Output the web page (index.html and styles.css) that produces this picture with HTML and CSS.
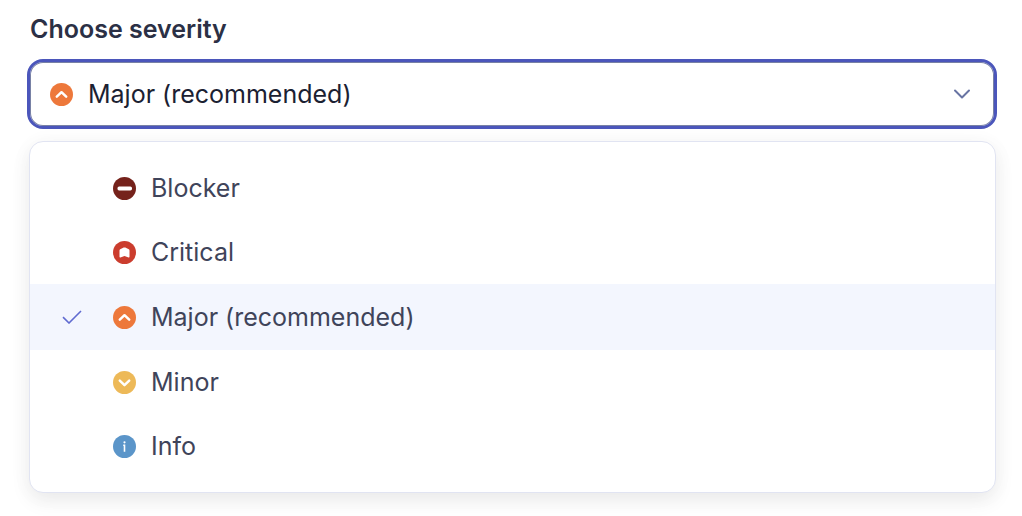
FILE: index.html
```html
<!DOCTYPE html>
<html lang="en">
<head>
<meta charset="utf-8">
<meta name="viewport" content="width=device-width, initial-scale=1">
<title>Choose severity</title>
<link rel="stylesheet" href="styles.css">
</head>
<body>
<main class="severity">
  <label class="severity-label" for="severity">Choose severity</label>
  <div class="field">
    <svg class="icon field-icon" viewBox="0 0 23 23" aria-hidden="true"><circle class="major" cx="11.5" cy="11.5" r="11.5"/><path class="stroke" d="M6.8 13.7l4.7-4.5 4.7 4.5"/></svg>
    <select class="field-select" id="severity">
      <option>Blocker</option>
      <option>Critical</option>
      <option selected>Major (recommended)</option>
      <option>Minor</option>
      <option>Info</option>
    </select>
    <svg class="chevron" viewBox="0 0 18 10" aria-hidden="true"><path d="M2 1.5l7 7 7-7"/></svg>
  </div>
  <div class="menu" role="listbox" aria-label="Choose severity">
    <button class="option" type="button" role="option" aria-selected="false">
      <span class="mark"></span>
      <svg class="icon" viewBox="0 0 23 23" aria-hidden="true"><circle class="blocker" cx="11.5" cy="11.5" r="11.5"/><rect class="solid" x="4.5" y="9.6" width="14.5" height="3.8" rx="1.6"/></svg>
      <span>Blocker</span>
    </button>
    <button class="option" type="button" role="option" aria-selected="false">
      <span class="mark"></span>
      <svg class="icon" viewBox="0 0 23 23" aria-hidden="true"><circle class="critical" cx="11.5" cy="11.5" r="11.5"/><path class="solid" d="M11.5 6.4q.4 0 .8.2l3.5 1.700q.7.4.7 1.200v6.200q0 .9-.9.700l-4.100-1.500-4.100 1.500q-.9.200-.9-.700V9.500q0-.8.7-1.200l3.500-1.700q.4-.2.800-.2z"/></svg>
      <span>Critical</span>
    </button>
    <button class="option option-selected" type="button" role="option" aria-selected="true">
      <span class="mark"><svg class="check" viewBox="0 0 20 14" aria-hidden="true"><path d="M1 7.200l6 5.800L19 1"/></svg></span>
      <svg class="icon" viewBox="0 0 23 23" aria-hidden="true"><circle class="major" cx="11.5" cy="11.5" r="11.5"/><path class="stroke" d="M6.8 13.7l4.7-4.5 4.7 4.5"/></svg>
      <span>Major (recommended)</span>
    </button>
    <button class="option" type="button" role="option" aria-selected="false">
      <span class="mark"></span>
      <svg class="icon" viewBox="0 0 23 23" aria-hidden="true"><circle class="minor" cx="11.5" cy="11.5" r="11.5"/><path class="stroke" d="M6.8 9.600l4.7 4.500 4.7-4.500"/></svg>
      <span>Minor</span>
    </button>
    <button class="option" type="button" role="option" aria-selected="false">
      <span class="mark"></span>
      <svg class="icon" viewBox="0 0 23 23" aria-hidden="true"><circle class="info" cx="11.5" cy="11.5" r="11.5"/><circle class="solid" cx="11.5" cy="7.300" r="1.100"/><path class="info-stem" d="M10.200 10.200h1.300v6.500"/></svg>
      <span>Info</span>
    </button>
  </div>
</main>
</body>
</html>
```
FILE: styles.css
```css
* {
  box-sizing: border-box;
}

body {
  margin: 0;
  background: #fff;
  font-family: Inter, "Liberation Sans", sans-serif;
  font-size: 25px;
  line-height: 32px;
}

.severity {
  display: flex;
  flex-direction: column;
  padding: 13px 25px 23px 27px;
}

.severity-label {
  margin: 0 3px 14px;
  color: #2b3045;
  font-weight: 600;
}

.field {
  display: grid;
  grid-template-columns: 100%;
  align-items: center;
}

.field > * {
  grid-area: 1 / 1;
}

.field-select {
  appearance: none;
  width: 100%;
  height: 70px;
  padding: 0 60px 0 58px;
  border: 3px solid #4b56bb;
  border-radius: 16px;
  outline: 0;
  background: #fff;
  box-shadow: inset 0 0 0 1px #7881a5;
  color: #1b2132;
  font: inherit;
}

.field-icon,
.chevron {
  z-index: 1;
  pointer-events: none;
}

.field-icon {
  margin-left: 23px;
}

.icon {
  flex: none;
  width: 23px;
  height: 23px;
}

.chevron {
  justify-self: end;
  width: 18px;
  height: 10px;
  margin-right: 26px;
  fill: none;
  stroke: #6874a3;
  stroke-width: 2;
  stroke-linecap: round;
  stroke-linejoin: round;
}

.menu {
  display: flex;
  flex-direction: column;
  margin: 12px 1px 0 2px;
  padding: 14px 0;
  border: 1px solid #e1e4f2;
  border-radius: 14px;
  background: #fff;
  box-shadow: 0 8px 20px rgba(0, 0, 0, 0.07), 0 2px 24px rgba(0, 0, 0, 0.03);
}

.option {
  display: flex;
  align-items: center;
  height: 64px;
  padding: 0 32px;
  border: 0;
  background: none;
  color: #3f445a;
  font: inherit;
  text-align: left;
}

.option .icon {
  margin-right: 15px;
}

.option-selected {
  height: 66px;
  background: #f3f6fe;
}

.mark {
  display: flex;
  width: 51px;
}

.check {
  width: 20px;
  height: 14px;
  fill: none;
  stroke: #606bd0;
  stroke-width: 1.6;
}

.blocker {
  fill: #75221b;
}

.critical {
  fill: #cb3d2e;
}

.major {
  fill: #ed783b;
}

.minor {
  fill: #edb958;
}

.info {
  fill: #5b95c9;
}

.solid {
  fill: #fff;
}

.stroke {
  fill: none;
  stroke: #fff;
  stroke-width: 2.5;
  stroke-linecap: round;
  stroke-linejoin: round;
}

.info-stem {
  fill: none;
  stroke: #fff;
  stroke-width: 1.6;
}
```
